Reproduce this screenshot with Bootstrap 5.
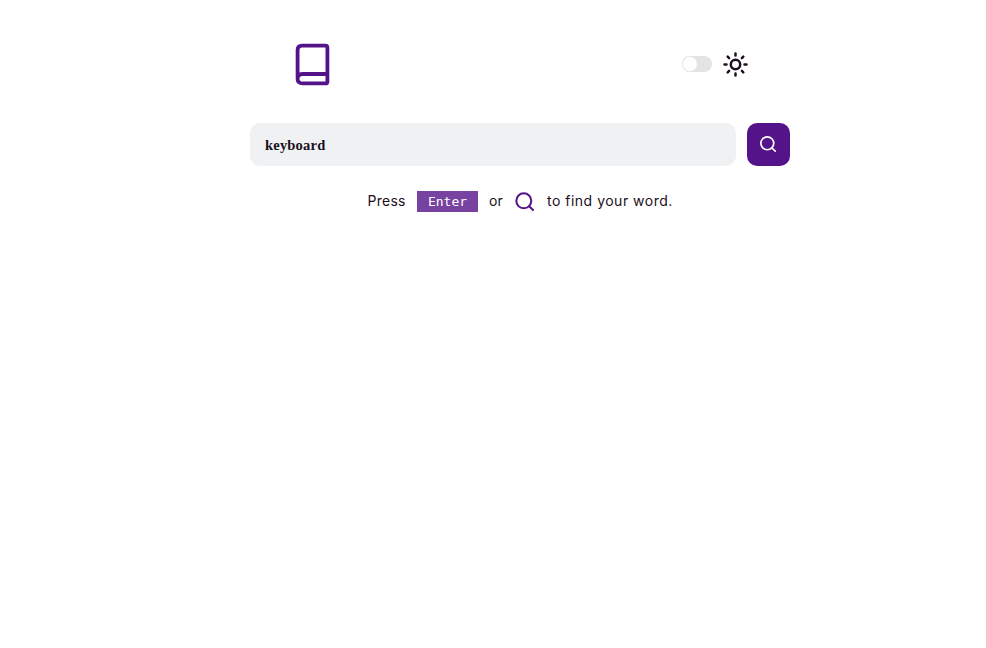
<!DOCTYPE html>
<html lang="en">
<head>
<meta charset="utf-8">
<meta name="viewport" content="width=device-width, initial-scale=1">
<title>Dictionary</title>
<link href="https://cdn.jsdelivr.net/npm/bootstrap@5.3.0/dist/css/bootstrap.min.css" rel="stylesheet">
<style>
body{background:#fff;color:#1b1020;font-family:Inter,sans-serif}
.dictionary{width:540px;margin-left:250px;padding-top:43px}
.topbar{height:43px;padding:0 42px 0 45px}
.theme{gap:11px;height:42px}
.form-switch .theme-switch{width:30px;height:16px;margin:0;border:0;background-color:#e4e4e4;background-image:none}
.theme-switch::before{content:"";display:block;width:14px;height:14px;margin:1px;border-radius:50%;background:#fff}
.search-form{margin-top:37px;gap:11px}
.search-form .word-input{height:43px;padding:1px 15px 0;border:0;border-radius:10px;background:#eff1f3;color:#1b1020;font:700 14.5px/1 "Liberation Serif",serif;letter-spacing:.2px}
.search-form .find-btn{width:43px;height:43px;border-radius:10px;background:#541388;border:0;color:#fff}
.hint{margin-top:25px;height:21px;font-size:14px;line-height:19px;padding-left:117.5px;white-space:nowrap;font-weight:400}
.hint-press{width:49.5px;letter-spacing:.25px}
.hint .enter-key{width:61px;height:21px;padding:0;border-radius:0;background:#7742a0;font:13px/21px "DejaVu Sans Mono",monospace;text-align:center;color:#fff}
.hint-or{width:26px;margin-left:11px}
.hint-tail{margin-left:12px;letter-spacing:.5px}
.hint>span{height:21px}
</style>
</head>
<body>
<main class="dictionary">
  <header class="topbar d-flex justify-content-between align-items-start">
    <svg width="35" height="43" viewBox="0 0 35 43" fill="none" stroke="#541388" stroke-width="3.8" stroke-linecap="round" stroke-linejoin="round"><path d="M2.6 35.7V7Q2.6 2.6 7 2.6H30.4Q32.4 2.6 32.4 4.6V38.4Q32.4 40.4 30.4 40.4H7.5Q2.6 40.4 2.6 35.7Q2.6 31 7.5 31H32"/></svg>
    <div class="theme d-flex align-items-center">
      <div class="form-check form-switch m-0 p-0 d-flex align-items-center"><input class="form-check-input theme-switch" type="checkbox" aria-label="Dark theme"></div>
      <svg width="25" height="26" viewBox="0 0 25 26" fill="none" stroke="#1b1020" stroke-width="2.5" stroke-linecap="round"><circle cx="12.5" cy="13.5" r="4.7"/><path d="M12.5 2.5v2M12.5 22.5v2M1.5 13.5h2M21.5 13.5h2M4.7 5.7l1.4 1.4M18.9 19.9l1.4 1.4M4.7 21.3l1.4-1.4M18.9 7.1l1.4-1.4"/></svg>
    </div>
  </header>
  <form class="search-form d-flex">
    <input class="word-input form-control" value="keyboard" aria-label="Word">
    <button class="find-btn btn p-0 flex-shrink-0 d-flex align-items-center justify-content-center" type="button" aria-label="Search">
      <svg width="17" height="17" viewBox="0 0 20 20" fill="none" stroke="currentColor" stroke-width="2" stroke-linecap="round"><circle cx="8.6" cy="8.6" r="7.6"/><path d="m14.1 14.1 3.8 3.8"/></svg>
    </button>
  </form>
  <div class="hint d-flex align-items-center">
    <span class="hint-press">Press</span><kbd class="enter-key">Enter</kbd><span class="hint-or">or</span>
    <svg width="20" height="20" viewBox="0 0 20 20" fill="none" stroke="#541388" stroke-width="2" stroke-linecap="round"><circle cx="8.8" cy="8.8" r="7.5"/><path d="m14.2 14.2 3.8 3.8"/></svg>
    <span class="hint-tail">to find your word.</span>
  </div>
</main>
<script src="https://cdn.jsdelivr.net/npm/bootstrap@5.3.0/dist/js/bootstrap.bundle.min.js"></script>
</body>
</html>
